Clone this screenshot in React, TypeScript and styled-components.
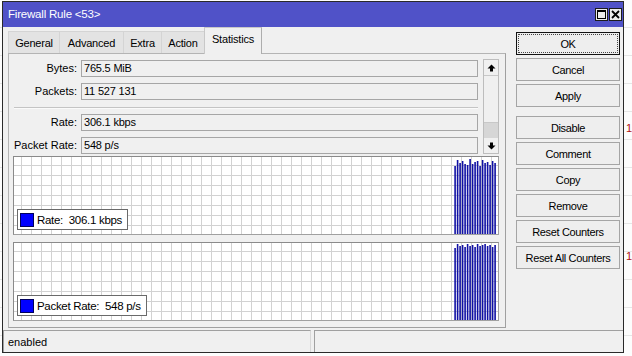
import React from "react";
import styled, { createGlobalStyle, css } from "styled-components";

const Global = createGlobalStyle`
  html, body { margin: 0; padding: 0; }
  body {
    width: 632px; height: 356px; overflow: hidden; background: #ffffff;
    font-family: "Liberation Sans", Arial, sans-serif;
    font-size: 11px; color: #000;
  }
  #root { width: 632px; height: 356px; }
  * { box-sizing: border-box; }
`;

const Desktop = styled.div`
  position: relative;
  width: 632px;
  height: 356px;
  overflow: hidden;
  padding: 1px 0 0 2px;
  background: #fdfdfd repeating-linear-gradient(to bottom, transparent 0 27px, #e6e6e6 27px 28px);
`;

const BackGlyph = styled.span<{ $x: number; $y: number; $c: string }>`
  position: absolute;
  left: ${(p) => p.$x}px;
  top: ${(p) => p.$y}px;
  color: ${(p) => p.$c};
  font-size: 11px;
`;

const Window = styled.div`
  position: relative;
  z-index: 1;
  width: 622px;
  height: 352px;
  border: 1px solid #2a2a2a;
  background: #f0f0f0;
  display: flex;
  flex-direction: column;
`;

const TitleBar = styled.div`
  height: 25px;
  flex: none;
  background: #5052c8;
  color: #fff;
  display: flex;
  align-items: center;
  justify-content: space-between;
  padding: 0 1px 0 5px;
`;

const TitleText = styled.span`
  font-size: 11.5px;
  letter-spacing: -0.2px;
  line-height: 14px;
  margin-top: -1px;
`;

const TitleButtons = styled.div`
  display: flex;
  gap: 1px;
  align-self: flex-start;
  margin-top: 6px;
`;

const TitleButton = styled.div`
  width: 13px;
  height: 13px;
  background: #ececec;
  border: 1px solid #1c1c1c;
  display: flex;
  align-items: center;
  justify-content: center;
`;

const Body = styled.div`
  flex: 1;
  display: flex;
  padding: 0 2px 0 5px;
  min-height: 0;
`;

const LeftCol = styled.div`
  width: 498px;
  display: flex;
  flex-direction: column;
`;

const TabsRow = styled.div`
  height: 26px;
  display: flex;
  align-items: flex-end;
  position: relative;
  z-index: 2;
`;

const Tab = styled.div<{ $w: number; $active?: boolean }>`
  width: ${(p) => p.$w}px;
  height: 22px;
  margin-right: -1px;
  border: 1px solid #d4d4d4;
  border-bottom: none;
  background: #e3e3e3;
  display: flex;
  align-items: center;
  justify-content: center;
  padding-top: 1px;
  letter-spacing: -0.2px;
  ${(p) =>
    p.$active &&
    css`
      height: 27px;
      margin-bottom: -1px;
      background: #f0f0f0;
      border-color: #c8c8c8;
      border-right-color: #adadad;
      padding-top: 0;
      padding-bottom: 4px;
    `}
`;

const Panel = styled.div`
  height: 275px;
  border: 1px solid #b4b4b4;
  border-right-color: #a0a0a0;
  border-bottom-color: #a0a0a0;
  background: #f0f0f0;
  padding: 5px 6px 6px 4px;
  display: flex;
  flex-direction: column;
`;

const TopSection = styled.div`
  height: 95px;
  display: flex;
  gap: 5px;
`;

const FieldsCol = styled.div`
  width: 465px;
  display: flex;
  flex-direction: column;
  gap: 6px;
  padding-top: 1px;
`;

const FieldRow = styled.div`
  display: grid;
  grid-template-columns: 64px 1fr;
  column-gap: 4px;
  align-items: center;
  height: 17px;
`;

const Label = styled.span`
  text-align: right;
  white-space: nowrap;
  line-height: 15px;
`;

const Value = styled.div`
  height: 17px;
  border: 1px solid #a6a6a6;
  background: #f0f0f0;
  padding-left: 2px;
  line-height: 15px;
  white-space: nowrap;
  letter-spacing: -0.2px;
`;

const Separator = styled.div`
  height: 2px;
  margin: 1px 0 -1px 1px;
  border-top: 1px solid #c4c4c4;
  border-bottom: 1px solid #fafafa;
`;

const ScrollBar = styled.div`
  width: 16px;
  height: 95px;
  border: 1px solid #bdbdbd;
  display: flex;
  flex-direction: column;
  background: #f0f0f0;
`;

const ScrollBtn = styled.div<{ $h: number }>`
  height: ${(p) => p.$h}px;
  flex: none;
  display: flex;
  align-items: center;
  justify-content: center;
  background: #f0f0f0;
`;

const Thumb = styled.div`
  flex: 1;
  border-top: 1px solid #c8c8c8;
  border-bottom: 1px solid #c8c8c8;
  background: #f0f0f0;
`;

const Track = styled.div`
  height: 15px;
  flex: none;
  background: #d6d6d6;
`;

const GraphArea = styled.div`
  margin-top: 2px;
  display: flex;
  flex-direction: column;
  gap: 7px;
`;

const Graph = styled.div`
  position: relative;
  height: 79px;
  border: 1px solid #a0a0a0;
  border-top-color: #8a8a8a;
  border-left-color: #8a8a8a;
  background-color: #ffffff;
  background-image: linear-gradient(to right, #d2d2d2 1px, transparent 1px),
    linear-gradient(to bottom, #d2d2d2 1px, transparent 1px);
  background-size: 10px 10px;
  background-position: 7px 8px;
`;

const Bars = styled.svg`
  position: absolute;
  right: 1px;
  top: 0;
  width: 43px;
  height: 100%;
`;

const Legend = styled.div`
  position: absolute;
  left: 3px;
  bottom: 4px;
  height: 21px;
  display: flex;
  align-items: center;
  gap: 3px;
  padding: 0 5px 0 2px;
  background: #fff;
  border: 1px solid #6a6a6a;
  white-space: pre;
  font-size: 11.5px;
  letter-spacing: -0.3px;
`;

const Swatch = styled.span`
  width: 14px;
  height: 14px;
  background: #0000ff;
  border: 1px solid #00005c;
`;

const ButtonCol = styled.div`
  margin-left: 10px;
  padding-top: 5px;
  width: 104px;
  display: flex;
  flex-direction: column;
  gap: 3px;
`;

const Button = styled.div<{ $primary?: boolean; $spaced?: boolean }>`
  position: relative;
  height: 23px;
  border: 1px solid #a5a5a5;
  background: #eeeeee;
  display: flex;
  align-items: center;
  justify-content: center;
  letter-spacing: -0.35px;
  ${(p) => p.$spaced && css`margin-top: 6px;`}
  ${(p) =>
    p.$primary &&
    css`
      border-color: #111;
      &::after {
        content: "";
        position: absolute;
        inset: 1px;
        border: 1px dotted #444;
      }
    `}
`;

const StatusBar = styled.div`
  height: 22px;
  flex: none;
  margin-top: 1px;
  display: flex;
`;

const StatusField = styled.div<{ $w?: number }>`
  ${(p) => (p.$w ? css`width: ${p.$w}px;` : css`flex: 1;`)}
  border-top: 1px solid #a0a0a0;
  border-left: 1px solid #a0a0a0;
  border-right: 1px solid #d8d8d8;
  display: flex;
  align-items: center;
  padding-left: 4px;
  margin-right: 3px;
  &:last-child { margin-right: 0; border-right: none; }
`;

const rateBars = [68, 74, 71, 73, 70, 69, 75, 70, 72, 73, 68, 74, 71, 72, 69, 73, 71];
const pktBars = [72, 76, 74, 75, 73, 76, 74, 75, 73, 76, 74, 75, 76, 74, 75, 73, 75];

function BarChart({ data }: { data: number[] }) {
  const h = 77;
  return (
    <Bars viewBox={`0 0 43 ${h}`} preserveAspectRatio="none">
      {data.map((v, i) => (
        <rect key={i} x={i * 2.5 + 0.3} y={h - v} width={1.6} height={v} fill="#1010a4" />
      ))}
    </Bars>
  );
}

const ArrowUp = () => (
  <svg width="9" height="8" viewBox="0 0 9 8">
    <path d="M4.5 0.5 L8.5 4.5 L6 4.5 L6 7.5 L3 7.5 L3 4.5 L0.5 4.5 Z" fill="#000" />
  </svg>
);
const ArrowDown = () => (
  <svg width="9" height="8" viewBox="0 0 9 8">
    <path d="M4.5 7.5 L8.5 3.5 L6 3.5 L6 0.5 L3 0.5 L3 3.5 L0.5 3.5 Z" fill="#000" />
  </svg>
);

const MaxIcon = () => (
  <svg width="9" height="9" viewBox="0 0 9 9">
    <rect x="0.5" y="0.5" width="8" height="8" fill="none" stroke="#000" />
    <rect x="0" y="0" width="9" height="2" fill="#000" />
  </svg>
);
const CloseIcon = () => (
  <svg width="9" height="9" viewBox="0 0 9 9">
    <path d="M1 1 L8 8 M8 1 L1 8" stroke="#000" strokeWidth="1.8" />
  </svg>
);

const tabs = [
  { name: "General", w: 52 },
  { name: "Advanced", w: 65 },
  { name: "Extra", w: 39 },
  { name: "Action", w: 44 },
  { name: "Statistics", w: 58, active: true },
];

const buttons = [
  { t: "OK", primary: true },
  { t: "Cancel" },
  { t: "Apply" },
  { t: "Disable", spaced: true },
  { t: "Comment" },
  { t: "Copy" },
  { t: "Remove" },
  { t: "Reset Counters" },
  { t: "Reset All Counters" },
];

export default function App() {
  return (
    <>
      <Global />
      <Desktop>
        <BackGlyph $x={626} $y={122} $c="#b01010">1</BackGlyph>
        <BackGlyph $x={626} $y={250} $c="#b01010">1</BackGlyph>
        <Window>
          <TitleBar>
            <TitleText>Firewall Rule &lt;53&gt;</TitleText>
            <TitleButtons>
              <TitleButton>
                <MaxIcon />
              </TitleButton>
              <TitleButton>
                <CloseIcon />
              </TitleButton>
            </TitleButtons>
          </TitleBar>
          <Body>
            <LeftCol>
              <TabsRow>
                {tabs.map((t) => (
                  <Tab key={t.name} $w={t.w} $active={t.active}>
                    {t.name}
                  </Tab>
                ))}
              </TabsRow>
              <Panel>
                <TopSection>
                  <FieldsCol>
                    <FieldRow>
                      <Label>Bytes:</Label>
                      <Value>765.5 MiB</Value>
                    </FieldRow>
                    <FieldRow>
                      <Label>Packets:</Label>
                      <Value>11 527 131</Value>
                    </FieldRow>
                    <Separator />
                    <FieldRow>
                      <Label>Rate:</Label>
                      <Value>306.1 kbps</Value>
                    </FieldRow>
                    <FieldRow>
                      <Label>Packet Rate:</Label>
                      <Value>548 p/s</Value>
                    </FieldRow>
                  </FieldsCol>
                  <ScrollBar>
                    <ScrollBtn $h={15}>
                      <ArrowUp />
                    </ScrollBtn>
                    <Thumb />
                    <Track />
                    <ScrollBtn $h={15}>
                      <ArrowDown />
                    </ScrollBtn>
                  </ScrollBar>
                </TopSection>
                <GraphArea>
                  <Graph>
                    <BarChart data={rateBars} />
                    <Legend>
                      <Swatch />
                      <span>Rate:  306.1 kbps</span>
                    </Legend>
                  </Graph>
                  <Graph>
                    <BarChart data={pktBars} />
                    <Legend>
                      <Swatch />
                      <span>Packet Rate:  548 p/s</span>
                    </Legend>
                  </Graph>
                </GraphArea>
              </Panel>
            </LeftCol>
            <ButtonCol>
              {buttons.map((b) => (
                <Button key={b.t} $primary={b.primary} $spaced={b.spaced}>
                  {b.t}
                </Button>
              ))}
            </ButtonCol>
          </Body>
          <StatusBar>
            <StatusField $w={308}>enabled</StatusField>
            <StatusField />
          </StatusBar>
        </Window>
      </Desktop>
    </>
  );
}
